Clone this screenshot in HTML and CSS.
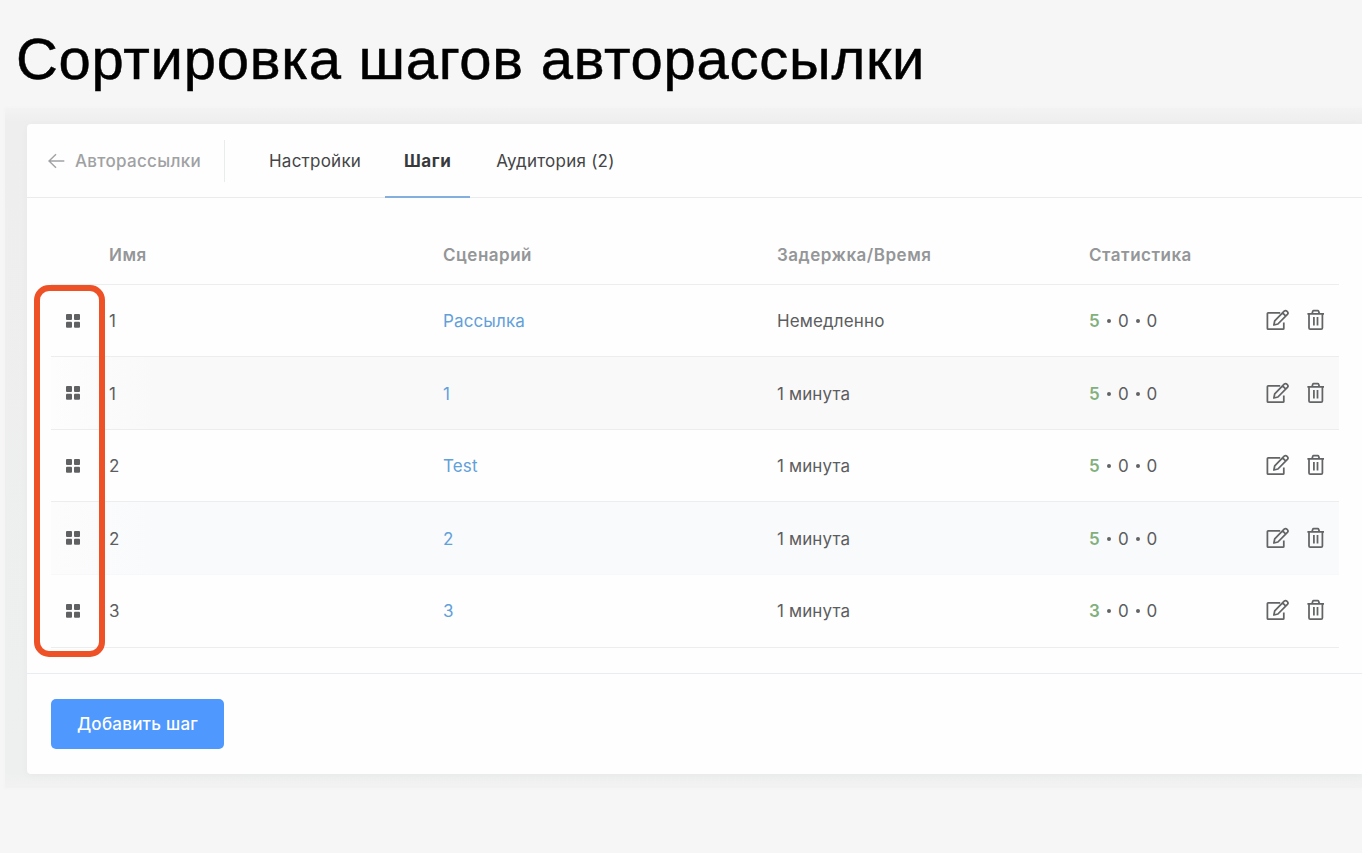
FILE: index.html
```html
<!DOCTYPE html>
<html lang="ru">
<head>
<meta charset="utf-8">
<title>Сортировка шагов авторассылки</title>
<link rel="stylesheet" href="styles.css">
</head>
<body>
<svg class="sprite" aria-hidden="true">
  <symbol id="grip" viewBox="0 0 14 14"><rect x="0" y="0" width="6" height="6" rx="1"/><rect x="8" y="0" width="6" height="6" rx="1"/><rect x="0" y="7.8" width="6" height="6" rx="1"/><rect x="8" y="7.8" width="6" height="6" rx="1"/></symbol>
  <symbol id="edit" viewBox="0 0 24 22"><path d="M14.2 3.8H2.2Q1.4 3.8 1.4 4.6V19.4Q1.4 20.2 2.2 20.2H17Q17.8 20.2 17.8 19.4V13.6"/><path d="M7.9 16L8.7 11.8L18.2 2.2Q19.6 .9 21.1 2.3Q22.8 3.9 21.4 5.4L11.9 15L7.9 16ZM16.6 3.9L19.8 7.1"/></symbol>
  <symbol id="trash" viewBox="0 0 18 22"><path d="M.4 4.9H17M2 5V19Q2 20.2 3.2 20.2H14.2Q15.4 20.2 15.4 19V5M5 4.7L5.8 2.2Q6 1.6 6.6 1.6H10.8Q11.4 1.6 11.6 2.2L12.4 4.7M6.9 8V16.4M10.5 8V16.4"/></symbol>
</svg>
<h1 class="title"><span>Сортировка шагов авторассылки</span></h1>
<main class="backdrop">
  <section class="card">
    <nav class="tabs">
      <a class="back"><svg class="arrow" viewBox="0 0 17 16"><path d="M16.3 8H1M8 1.2L1 8L8 14.8"/></svg><span>Авторассылки</span></a>
      <a class="tab">Настройки</a>
      <a class="tab active">Шаги</a>
      <a class="tab">Аудитория (2)</a>
    </nav>
    <div class="table">
      <div class="row head"><span></span><span>Имя</span><span>Сценарий</span><span>Задержка/Время</span><span>Статистика</span></div>
      <div class="row"><svg class="grip"><use href="#grip"/></svg><span>1</span><a class="link">Рассылка</a><span>Немедленно</span><span class="stat"><b>5</b><i></i><span>0</span><i></i><span>0</span></span><svg class="edit"><use href="#edit"/></svg><svg class="trash"><use href="#trash"/></svg></div>
      <div class="row warm"><svg class="grip"><use href="#grip"/></svg><span>1</span><a class="link">1</a><span>1 минута</span><span class="stat"><b>5</b><i></i><span>0</span><i></i><span>0</span></span><svg class="edit"><use href="#edit"/></svg><svg class="trash"><use href="#trash"/></svg></div>
      <div class="row"><svg class="grip"><use href="#grip"/></svg><span>2</span><a class="link">Test</a><span>1 минута</span><span class="stat"><b>5</b><i></i><span>0</span><i></i><span>0</span></span><svg class="edit"><use href="#edit"/></svg><svg class="trash"><use href="#trash"/></svg></div>
      <div class="row cool"><svg class="grip"><use href="#grip"/></svg><span>2</span><a class="link">2</a><span>1 минута</span><span class="stat"><b>5</b><i></i><span>0</span><i></i><span>0</span></span><svg class="edit"><use href="#edit"/></svg><svg class="trash"><use href="#trash"/></svg></div>
      <div class="row"><svg class="grip"><use href="#grip"/></svg><span>3</span><a class="link">3</a><span>1 минута</span><span class="stat"><b>3</b><i></i><span>0</span><i></i><span>0</span></span><svg class="edit"><use href="#edit"/></svg><svg class="trash"><use href="#trash"/></svg></div>
      <div class="highlight"></div>
    </div>
    <footer class="footer"><button class="add">Добавить шаг</button></footer>
  </section>
</main>
</body>
</html>
```
FILE: styles.css
```css
* { box-sizing: border-box; }
body {
  margin: 0;
  height: 853px;
  overflow: hidden;
  background: #f6f6f6;
  font: 17px/24px Inter, "Noto Sans", sans-serif;
  letter-spacing: .13px;
  color: #5c5d5f;
  white-space: nowrap;
}
.sprite { display: none; }
.title {
  margin: 0;
  height: 108px;
  padding: 26px 0 0 16px;
  font: 400 58px/66px "Liberation Sans", Arial, sans-serif;
  letter-spacing: .73px;
  -webkit-text-stroke: .5px #000;
  color: #000;
}
.backdrop {
  margin-left: 5px;
  height: 680px;
  padding: 16px 0 0 22px;
  background: linear-gradient(#f3f3f3, #eeeeee 14px, #eeefef 664px, #f2f2f2);
  box-shadow: 0 0 4px #f2f2f2;
}
.card {
  height: 650px;
  background: #fefefe;
  border-radius: 4px 0 0 4px;
  box-shadow: 0 2px 8px rgba(0, 0, 0, .03);
}
.tabs {
  display: flex;
  height: 74px;
  border-bottom: 1px solid #e9ebed;
  letter-spacing: .24px;
  color: #444547;
}
.back {
  display: flex;
  align-items: center;
  gap: 10px;
  width: 198px;
  height: 42px;
  margin: 16px 24px 0 0;
  padding-left: 21px;
  border-right: 1px solid #e9ebec;
  font-weight: 500;
  letter-spacing: .3px;
  color: #a0a1a3;
}
.arrow { width: 17px; height: 16px; fill: none; stroke: #a0a2a4; stroke-width: 1.4; }
.tab {
  height: 74px;
  padding: 25px 20px 0;
}
.active {
  width: 85px;
  margin: 0 6px 0 4px;
  padding: 25px 0 0;
  text-align: center;
  font-weight: 700;
  letter-spacing: .6px;
  color: #38393b;
  border-bottom: 2px solid #84afdc;
}
.table { position: relative; height: 475px; margin: 0 23px 0 24px; padding-top: 28px; }
.row {
  display: grid;
  grid-template-columns: 58px 334px 334px 312px 177px 41px 19px;
  align-items: center;
  height: 72.6px;
  padding-top: 1.4px;
  border-bottom: 1px solid #ebedef;
}
.head { height: 58.6px; font-weight: 600; letter-spacing: .5px; color: #949698; }
.warm { background: linear-gradient(90deg, #fdfdfd, #faf9fa 8%); }
.cool { background: linear-gradient(90deg, #fcfcfd, #f9fafb 8%); border-bottom-color: #f7f8f9; }
.link { color: #62a0da; }
.grip { width: 14px; height: 14px; margin: -1px 0 0 15px; fill: #606163; }
.edit, .trash { fill: none; stroke: #626466; stroke-width: 1.75; stroke-linejoin: round; }
.edit { width: 24px; height: 22px; margin-top: -2px; }
.trash { width: 18px; height: 22px; margin-top: -2px; }
.stat { display: flex; align-items: center; }
.stat b { width: 18px; font-weight: 600; color: #82b07d; }
.stat i { width: 4px; height: 4px; margin-right: 7px; border-radius: 50%; background: #626365; }
.stat span { width: 17.5px; }
.highlight {
  position: absolute;
  left: -17px;
  top: 87px;
  width: 71px;
  height: 372px;
  border: 6px solid #ef5126;
  border-radius: 15px;
}
.footer { height: 101px; padding: 25px 24px; border-top: 1px solid #e9edf1; }
.add {
  width: 173px;
  height: 50px;
  padding: 1px 0 0;
  border: 0;
  border-radius: 5px;
  background: #4f98fe;
  color: #fff;
  font: 500 17px/49px Inter, sans-serif;
  letter-spacing: .25px;
}
```
